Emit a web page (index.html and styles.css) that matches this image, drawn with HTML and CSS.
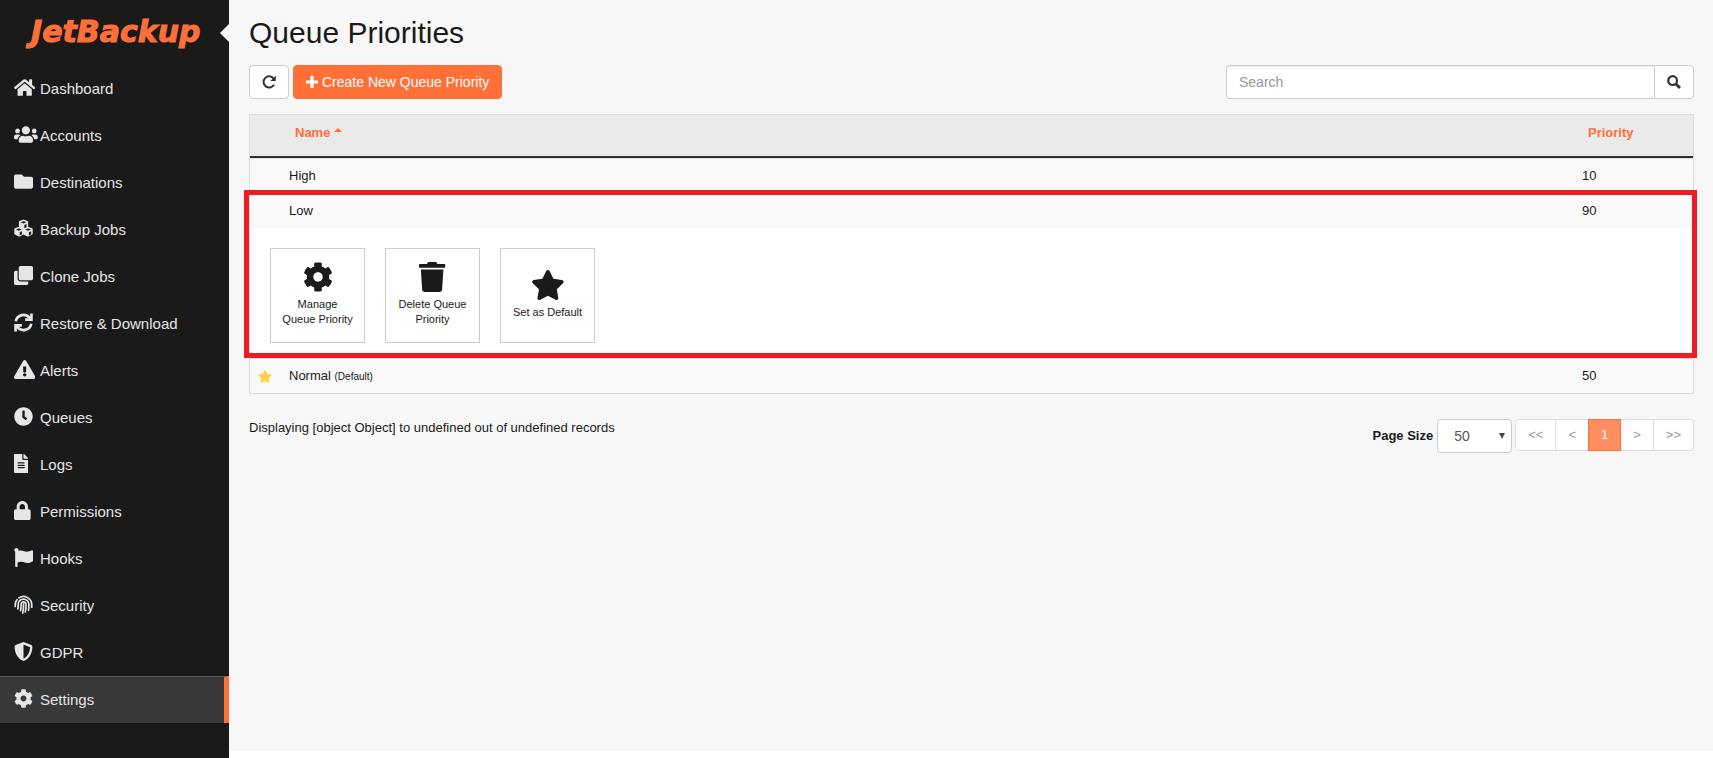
FILE: index.html
```html
<!DOCTYPE html>
<html lang="en">
    <head>
        <meta charset="utf-8">
        <title>JetBackup - Queue Priorities</title>
        <link rel="stylesheet" href="styles.css">
    </head>
    <body>
        <svg class="sprite" aria-hidden="true">
            <symbol id="cog" viewBox="0 0 512 512"><path d="M487.4 315.7l-42.6-24.6c4.3-23.2 4.3-47 0-70.2l42.6-24.6c4.9-2.8 7.1-8.6 5.5-14-11.1-35.6-30-67.8-54.7-94.6-3.8-4.1-10-5.1-14.8-2.3L380.8 110c-17.9-15.4-38.5-27.3-60.8-35.1V25.8c0-5.6-3.9-10.5-9.4-11.7-36.7-8.2-74.3-7.8-109.2 0-5.5 1.2-9.4 6.1-9.4 11.7V75c-22.2 7.9-42.8 19.8-60.8 35.1L88.7 85.5c-4.9-2.8-11-1.9-14.8 2.3-24.7 26.7-43.6 58.9-54.7 94.6-1.7 5.4.6 11.2 5.5 14L67.3 221c-4.3 23.2-4.3 47 0 70.2l-42.6 24.6c-4.9 2.8-7.1 8.6-5.5 14 11.1 35.6 30 67.8 54.7 94.6 3.8 4.1 10 5.1 14.8 2.3l42.6-24.6c17.9 15.4 38.5 27.3 60.8 35.1v49.2c0 5.6 3.9 10.5 9.4 11.7 36.7 8.2 74.3 7.8 109.2 0 5.5-1.2 9.4-6.1 9.4-11.7v-49.2c22.2-7.9 42.8-19.8 60.8-35.1l42.6 24.6c4.9 2.8 11 1.9 14.8-2.3 24.7-26.7 43.6-58.9 54.7-94.6 1.5-5.5-.7-11.3-5.6-14.1zM256 336c-44.1 0-80-35.9-80-80s35.9-80 80-80 80 35.9 80 80-35.9 80-80 80z"/></symbol>
            <symbol id="star" viewBox="0 0 576 512"><path d="M259.3 17.8L194 150.2 47.9 171.5c-26.2 3.8-36.7 36.1-17.7 54.6l105.7 103-25 145.5c-4.5 26.3 23.2 46 46.4 33.7L288 439.6l130.7 68.7c23.2 12.2 50.9-7.4 46.4-33.7l-25-145.5 105.7-103c19-18.5 8.5-50.8-17.7-54.6L382 150.2 316.7 17.8c-11.7-23.6-45.6-23.9-57.4 0z"/></symbol>
        </svg>

        <div class="layout">
            <aside class="sidebar">
                <a href="#" class="logo">JetBackup</a>
                <button type="button" class="collapse" aria-label="Collapse menu"></button>
                <nav class="menu">
                    <a href="#" class="menu__item">
                        <span class="menu__icon"><svg viewBox="0 0 576 512"><path d="M280.37 148.26L96 300.11V464a16 16 0 0 0 16 16l112.06-.29a16 16 0 0 0 15.92-16V368a16 16 0 0 1 16-16h64a16 16 0 0 1 16 16v95.64a16 16 0 0 0 16 16.05L464 480a16 16 0 0 0 16-16V300L295.67 148.26a12.19 12.19 0 0 0-15.3 0zM571.6 251.47L488 182.56V44.05a12 12 0 0 0-12-12h-56a12 12 0 0 0-12 12v72.61L318.47 43a48 48 0 0 0-61 0L4.34 251.47a12 12 0 0 0-1.6 16.9l25.5 31A12 12 0 0 0 45.15 301l235.22-193.74a12.19 12.19 0 0 1 15.3 0L530.9 301a12 12 0 0 0 16.9-1.6l25.5-31a12 12 0 0 0-1.7-16.93z"/></svg></span>Dashboard
                    </a>
                    <a href="#" class="menu__item">
                        <span class="menu__icon"><svg viewBox="0 0 640 512"><path d="M96 224c35.3 0 64-28.7 64-64s-28.7-64-64-64-64 28.7-64 64 28.7 64 64 64zm448 0c35.3 0 64-28.7 64-64s-28.7-64-64-64-64 28.7-64 64 28.7 64 64 64zm32 32h-64c-17.6 0-33.5 7.1-45.1 18.6 40.3 22.1 68.9 62 75.1 109.4h66c17.7 0 32-14.3 32-32v-32c0-35.3-28.7-64-64-64zm-256 0c61.9 0 112-50.1 112-112S381.9 32 320 32 208 82.1 208 144s50.1 112 112 112zm76.8 32h-8.3c-20.8 10-43.9 16-68.5 16s-47.6-6-68.5-16h-8.3C179.6 288 128 339.6 128 403.2V432c0 26.5 21.5 48 48 48h288c26.5 0 48-21.5 48-48v-28.8c0-63.6-51.6-115.2-115.2-115.2zm-223.7-13.4C161.5 263.1 145.6 256 128 256H64c-35.3 0-64 28.7-64 64v32c0 17.7 14.3 32 32 32h65.9c6.3-47.4 34.9-87.3 75.2-109.4z"/></svg></span>Accounts
                    </a>
                    <a href="#" class="menu__item">
                        <span class="menu__icon"><svg viewBox="0 0 512 512"><path d="M464 128H272l-64-64H48C21.49 64 0 85.49 0 112v288c0 26.51 21.49 48 48 48h416c26.51 0 48-21.49 48-48V176c0-26.51-21.49-48-48-48z"/></svg></span>Destinations
                    </a>
                    <a href="#" class="menu__item">
                        <span class="menu__icon"><svg viewBox="0 0 512 512"><path fill-rule="evenodd" d="M256 12l108 42q16 7 16 24v130l108 42q16 7 16 24v120q0 17-16 25l-104 52q-14 7-28 0l-100-50-100 50q-14 7-28 0L24 419q-16-8-16-25V274q0-17 16-24l108-42V78q0-17 16-24zM256 58l-78 31 78 32 78-32zM278 162v84l60-25v-85zM132 254l-78 31 78 32 78-32zM154 358v84l60-30v-80zM380 254l-78 31 78 32 78-32zM402 358v84l60-30v-80z"/></svg></span>Backup Jobs
                    </a>
                    <a href="#" class="menu__item">
                        <span class="menu__icon"><svg viewBox="0 0 512 512"><path d="M464 0c26.51 0 48 21.49 48 48v288c0 26.51-21.49 48-48 48H176c-26.51 0-48-21.49-48-48V48c0-26.51 21.49-48 48-48h288M176 416c-44.112 0-80-35.888-80-80V128H48c-26.51 0-48 21.49-48 48v288c0 26.51 21.49 48 48 48h288c26.51 0 48-21.49 48-48v-48H176z"/></svg></span>Clone Jobs
                    </a>
                    <a href="#" class="menu__item">
                        <span class="menu__icon"><svg viewBox="0 0 512 512"><g class="line"><path d="M46 222A212 212 0 0 1 430 146M466 290A212 212 0 0 1 82 366"/><path d="M300 180H470V12M212 332H42V500"/></g></svg></span>Restore &amp; Download
                    </a>
                    <a href="#" class="menu__item">
                        <span class="menu__icon"><svg viewBox="0 0 576 512"><path d="M569.517 440.013C587.975 472.007 564.806 512 527.94 512H48.054c-36.937 0-59.999-40.055-41.577-71.987L246.423 23.985c18.467-32.009 64.72-31.951 83.154 0l239.94 416.028zM288 354c-25.405 0-46 20.595-46 46s20.595 46 46 46 46-20.595 46-46-20.595-46-46-46zm-43.673-165.346l7.418 136c.347 6.364 5.609 11.346 11.982 11.346h48.546c6.373 0 11.635-4.982 11.982-11.346l7.418-136c.375-6.874-5.098-12.654-11.982-12.654h-63.383c-6.884 0-12.356 5.78-11.981 12.654z"/></svg></span>Alerts
                    </a>
                    <a href="#" class="menu__item">
                        <span class="menu__icon"><svg viewBox="0 0 512 512"><path d="M256 8C119 8 8 119 8 256s111 248 248 248 248-111 248-248S393 8 256 8zm92.5 313l-20 25a16 16 0 0 1-22.5 2.5l-67-49.7a40 40 0 0 1-15-31.3V112a16 16 0 0 1 16-16h32a16 16 0 0 1 16 16v144l58 42.5a16 16 0 0 1 2.5 22.5z"/></svg></span>Queues
                    </a>
                    <a href="#" class="menu__item">
                        <span class="menu__icon"><svg viewBox="0 0 384 512"><path d="M224 136V0H24C10.7 0 0 10.7 0 24v464c0 13.3 10.7 24 24 24h336c13.3 0 24-10.7 24-24V160H248c-13.2 0-24-10.8-24-24zm64 236c0 6.6-5.4 12-12 12H108c-6.6 0-12-5.4-12-12v-8c0-6.6 5.4-12 12-12h168c6.6 0 12 5.4 12 12v8zm0-64c0 6.6-5.4 12-12 12H108c-6.6 0-12-5.4-12-12v-8c0-6.6 5.4-12 12-12h168c6.6 0 12 5.4 12 12v8zm0-72v8c0 6.6-5.4 12-12 12H108c-6.6 0-12-5.4-12-12v-8c0-6.6 5.4-12 12-12h168c6.6 0 12 5.4 12 12zm96-114.1v6.1H256V0h6.1c6.4 0 12.5 2.5 17 7l97.9 98c4.5 4.5 7 10.6 7 16.9z"/></svg></span>Logs
                    </a>
                    <a href="#" class="menu__item">
                        <span class="menu__icon"><svg viewBox="0 0 448 512"><path d="M400 224h-24v-72C376 68.2 307.8 0 224 0S72 68.2 72 152v72H48c-26.5 0-48 21.5-48 48v192c0 26.5 21.5 48 48 48h352c26.5 0 48-21.5 48-48V272c0-26.5-21.5-48-48-48zm-104 0H152v-72c0-39.7 32.3-72 72-72s72 32.3 72 72v72z"/></svg></span>Permissions
                    </a>
                    <a href="#" class="menu__item">
                        <span class="menu__icon"><svg viewBox="0 0 512 512"><path d="M349.565 98.783C295.978 98.783 251.721 64 184.348 64c-24.955 0-47.309 4.384-68.045 12.013a55.947 55.947 0 0 0 3.586-23.562C118.117 24.015 94.806 1.206 66.338.048 34.345-1.254 8 24.296 8 56c0 19.026 9.497 35.825 24 45.945V488c0 13.255 10.745 24 24 24h16c13.255 0 24-10.745 24-24v-94.4c28.311-12.064 63.582-22.122 114.435-22.122 53.588 0 97.844 34.783 165.217 34.783 48.169 0 86.667-16.294 122.505-40.858C506.84 359.452 512 349.571 512 339.045v-243.1c0-23.393-24.269-38.87-45.485-29.016-34.338 15.948-76.454 31.854-116.95 31.854z"/></svg></span>Hooks
                    </a>
                    <a href="#" class="menu__item">
                        <span class="menu__icon"><svg viewBox="0 0 512 512"><g class="line line--thin"><path d="M256 246q4 120-22 242M178 420q14-80 12-164a66 66 0 0 1 132-4q4 100-18 204M104 376q10-60 8-120a144 144 0 0 1 288-6q2 90-10 162M34 310v-54q2-74 46-128M132 78a222 222 0 0 1 346 180v72"/></g></svg></span>Security
                    </a>
                    <a href="#" class="menu__item">
                        <span class="menu__icon"><svg viewBox="0 0 512 512"><path d="M466.5 83.7l-192-80a48.15 48.15 0 0 0-36.9 0l-192 80C27.7 91.1 16 108.6 16 128c0 198.5 114.5 335.7 221.5 380.3 11.8 4.9 25.1 4.9 36.9 0C360.1 472.6 496 349.3 496 128c0-19.4-11.7-36.9-29.5-44.3zM256.1 446.3l-.1-381 175.9 73.3c-3.3 151.4-82.1 261.1-175.8 307.7z"/></svg></span>GDPR
                    </a>
                    <a href="#" class="menu__item menu__item--active">
                        <span class="menu__icon"><svg viewBox="0 0 512 512"><use href="#cog"/></svg></span>Settings
                    </a>
                </nav>
            </aside>

            <main class="content">
                <h1>Queue Priorities</h1>

                <div class="toolbar">
                    <button type="button" class="btn" aria-label="Refresh">
                        <svg class="btn__refresh" viewBox="0 0 14 14"><path d="M11.5 3.4A5.6 5.6 0 1 0 12 9.8" fill="none" stroke="currentColor" stroke-width="2"/><path d="M13.8 0.6V6H8.4z"/></svg>
                    </button>
                    <button type="button" class="btn btn--primary">
                        <svg class="btn__plus" viewBox="0 0 12 12"><path d="M4.4 0h3.2v4.4H12v3.2H7.6V12H4.4V7.6H0V4.4h4.4z"/></svg>
                        Create New Queue Priority
                    </button>
                    <form class="search">
                        <input type="text" class="search__input" placeholder="Search" aria-label="Search">
                        <button type="button" class="search__button" aria-label="Search">
                            <svg viewBox="0 0 14 14"><circle cx="5.6" cy="5.6" r="4.4" fill="none" stroke="currentColor" stroke-width="2.2"/><path d="M9 9l4 4" stroke="currentColor" stroke-width="2.8"/></svg>
                        </button>
                    </form>
                </div>

                <table class="list">
                    <thead>
                        <tr>
                            <th class="list__mark"></th>
                            <th><a href="#">Name <svg class="list__caret" viewBox="0 0 8 4"><path d="M4 0l4 4H0z"/></svg></a></th>
                            <th class="list__priority"><a href="#">Priority</a></th>
                        </tr>
                    </thead>
                    <tbody>
                        <tr>
                            <td></td>
                            <td>High</td>
                            <td>10</td>
                        </tr>
                    </tbody>
                    <tbody class="selected">
                        <tr>
                            <td></td>
                            <td>Low</td>
                            <td>90</td>
                        </tr>
                        <tr>
                            <td colspan="3" class="selected__details">
                                <div class="actions">
                                    <button type="button" class="action">
                                        <svg viewBox="0 0 512 512"><use href="#cog"/></svg>
                                        Manage Queue Priority
                                    </button>
                                    <button type="button" class="action">
                                        <svg viewBox="0 0 448 512"><path d="M432 32H312l-9.4-18.7A24 24 0 0 0 281.1 0H166.8a23.72 23.72 0 0 0-21.4 13.3L136 32H16A16 16 0 0 0 0 48v32a16 16 0 0 0 16 16h416a16 16 0 0 0 16-16V48a16 16 0 0 0-16-16zM32 128l21.2 339a48 48 0 0 0 47.9 45h245.8a48 48 0 0 0 47.9-45L416 128z"/></svg>
                                        Delete Queue Priority
                                    </button>
                                    <button type="button" class="action">
                                        <svg viewBox="0 0 576 512"><use href="#star"/></svg>
                                        Set as Default
                                    </button>
                                </div>
                            </td>
                        </tr>
                    </tbody>
                    <tbody>
                        <tr>
                            <td><svg class="list__star" viewBox="0 0 576 512"><use href="#star"/></svg></td>
                            <td>Normal <small>(Default)</small></td>
                            <td>50</td>
                        </tr>
                    </tbody>
                </table>

                <div class="footer">
                    <p class="footer__info">Displaying [object Object] to undefined out of undefined records</p>
                    <label for="pageSize">Page Size</label>
                    <div class="size">
                        <select id="pageSize">
                            <option>10</option>
                            <option>25</option>
                            <option selected>50</option>
                            <option>100</option>
                        </select>
                        <svg class="size__arrow" viewBox="0 0 6 6"><path d="M0 0h6L3 6z"/></svg>
                    </div>
                    <nav class="pages" aria-label="Pages">
                        <a href="#">&lt;&lt;</a>
                        <a href="#">&lt;</a>
                        <a href="#" class="pages__current">1</a>
                        <a href="#">&gt;</a>
                        <a href="#">&gt;&gt;</a>
                    </nav>
                </div>
            </main>
        </div>
    </body>
</html>
```
FILE: styles.css
```css
*{
    box-sizing: border-box;
}
body{
    margin: 0;
    background: #fff;
    color: #1a1a1a;
    font-family: "Liberation Sans", Arial, sans-serif;
    font-size: 13px;
    line-height: 18px;
}
a{
    text-decoration: none;
}
button, input, select{
    font-family: inherit;
}
svg{
    fill: currentColor;
}
.sprite{
    display: none;
}
.layout{
    display: flex;
    min-height: 100vh;
}

/* sidebar */
.sidebar{
    position: relative;
    flex: 0 0 229px;
    background: #1a1a1a;
}
.logo{
    display: block;
    height: 65px;
    padding: 14px 0 0 31px;
    color: #ff7038;
    font-family: "DejaVu Sans", sans-serif;
    font-size: 30px;
    font-weight: bold;
    font-style: italic;
    line-height: 36px;
    -webkit-text-stroke: 1px #ff7038;
}
.collapse{
    position: absolute;
    top: 24px;
    right: 0;
    width: 9px;
    height: 18px;
    padding: 0;
    border: 0;
    background: #f7f7f7;
    clip-path: polygon(0 50%, 100% 0, 100% 100%);
}
.menu__item{
    display: flex;
    align-items: center;
    height: 47px;
    padding-left: 14px;
    border-top: 1px solid transparent;
    color: #e6e6e6;
    font-size: 15px;
}
.menu__item--active{
    background: #383838;
    border-top-color: #5a5a5a;
    border-right: 5px solid #ff7038;
}
.menu__icon{
    width: 26px;
    height: 22px;
}
.menu__icon svg{
    display: block;
    height: 19px;
}
.line{
    fill: none;
    stroke: currentColor;
    stroke-width: 72;
}
.line--thin{
    stroke-width: 46;
    stroke-linecap: round;
}

/* content */
.content{
    flex: 1;
    margin-bottom: 7px;
    padding: 16px 19px 0 20px;
    background: #f7f7f7;
}
h1{
    margin: 0 0 16px;
    font-size: 30px;
    font-weight: normal;
    line-height: 34px;
}
.toolbar{
    display: flex;
    gap: 4px;
    margin: -1px 0 15px;
}
.btn{
    display: flex;
    align-items: center;
    gap: 4px;
    height: 34px;
    padding: 0 12px;
    border: 1px solid #ccc;
    border-radius: 4px;
    background: #fff;
    color: #333;
    font-size: 14px;
}
.btn--primary{
    border-color: #ff7038;
    background: #ff7038;
    color: #fff;
}
.btn__refresh{
    width: 14px;
    height: 14px;
}
.btn__plus{
    width: 12px;
    height: 12px;
}
.search{
    display: flex;
    width: 468px;
    margin-left: auto;
}
.search__input{
    flex: 1;
    height: 34px;
    padding: 0 12px;
    border: 1px solid #ccc;
    border-right: 0;
    border-radius: 4px 0 0 4px;
    box-shadow: inset 0 1px 1px rgba(0, 0, 0, .075);
    font-size: 14px;
}
.search__input::placeholder{
    color: #999;
}
.search__button{
    width: 40px;
    padding: 0;
    border: 1px solid #ccc;
    border-radius: 0 4px 4px 0;
    background: #fff;
    color: #333;
}
.search__button svg{
    display: block;
    width: 14px;
    height: 14px;
    margin: 0 auto;
}

/* table */
.list{
    width: 100%;
    border: 1px solid #ddd;
    border-spacing: 0;
    table-layout: fixed;
}
.list th{
    height: 43px;
    padding: 9px 14px 8px;
    border-bottom: 2px solid #2f2f2f;
    background: #eaeaea;
    text-align: left;
    vertical-align: top;
}
.list th a{
    color: #ff7038;
}
.list td{
    height: 35px;
    padding: 8px;
    border-top: 1px solid #ddd;
    background: #f9f9f9;
}
.list .list__mark{
    width: 31px;
    padding: 0;
}
.list__priority{
    width: 119px;
}
.list__caret{
    width: 8px;
    height: 4px;
    vertical-align: 5px;
}
.list__star{
    display: block;
    width: 14px;
    height: 13px;
    color: #ffd042;
}
.list small{
    font-size: 10px;
    line-height: 1;
}

/* open row with its red frame */
.selected{
    position: relative;
}
.selected::after{
    content: "";
    position: absolute;
    top: -3px;
    right: -4px;
    bottom: 0;
    left: -6px;
    border: 5px solid #ed1c24;
    pointer-events: none;
}
.list .selected__details{
    padding: 20px 20px 15px;
    border-top: 0;
    background: #fff;
}
.actions{
    display: flex;
    gap: 20px;
}
.action{
    display: flex;
    flex-direction: column;
    align-items: center;
    justify-content: center;
    gap: 5px;
    width: 95px;
    height: 95px;
    padding: 0 10px 2px;
    border: 1px solid #ccc;
    background: #fff;
    color: #1a1a1a;
    font-size: 11px;
    line-height: 15px;
}
.action svg{
    height: 30px;
}

/* footer */
.footer{
    display: flex;
    align-items: flex-start;
    margin-top: 25px;
}
.footer__info{
    margin: 0 auto 0 0;
}
.footer label{
    margin-right: 4px;
    font-weight: bold;
    line-height: 34px;
}
.size{
    position: relative;
    margin-right: 3px;
}
.size select{
    display: block;
    width: 75px;
    height: 34px;
    padding: 0 16px;
    border: 1px solid #ccc;
    border-radius: 4px;
    background: #fff;
    color: #555;
    font-size: 14px;
    appearance: none;
}
.size__arrow{
    position: absolute;
    top: 14px;
    right: 7px;
    width: 6px;
    height: 6px;
    color: #444;
    pointer-events: none;
}
.pages{
    display: flex;
}
.pages a{
    height: 32px;
    padding: 0 12px;
    border: 1px solid #ddd;
    border-left-width: 0;
    background: #fff;
    color: #999;
    line-height: 30px;
}
.pages a:first-child{
    border-left-width: 1px;
    border-radius: 4px 0 0 4px;
}
.pages a:last-child{
    border-radius: 0 4px 4px 0;
}
.pages .pages__current{
    margin-left: -1px;
    border: 1px solid #ff7038;
    background: #ff8d60;
    color: #fff;
}
```
